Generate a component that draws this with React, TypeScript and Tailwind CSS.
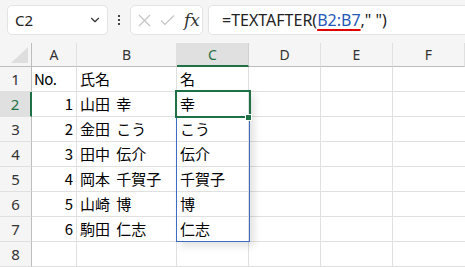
import { ChevronDown } from "lucide-react";

const cols = [
  { key: "A", w: "w-[45px]" },
  { key: "B", w: "w-[100px]" },
  { key: "C", w: "w-[72px]" },
  { key: "D", w: "w-[72px]" },
  { key: "E", w: "w-[72px]" },
  { key: "F", w: "w-[72px]" },
];

type Row = { a?: string; b?: string; c?: string };

const rows: Row[] = [
  { a: "No.", b: "氏名", c: "名" },
  { a: "1", b: "山田 幸", c: "幸" },
  { a: "2", b: "金田 こう", c: "こう" },
  { a: "3", b: "田中 伝介", c: "伝介" },
  { a: "4", b: "岡本 千賀子", c: "千賀子" },
  { a: "5", b: "山崎 博", c: "博" },
  { a: "6", b: "駒田 仁志", c: "仁志" },
  {},
];

const font = { fontFamily: '"Noto Sans CJK JP", "Noto Sans", sans-serif' };

function FormulaBar() {
  return (
    <div className="flex h-[43px] items-start gap-0 bg-[#f5f5f5] pt-[5px] pl-[7px]">
      <div className="flex h-[30px] w-[101px] items-center justify-between rounded-[5px] border border-[#e3e3e3] bg-white pl-[7px] pr-[5px]">
        <span className="text-[15px] text-[#222]" style={{ fontFamily: '"Noto Sans", sans-serif' }}>
          C2
        </span>
        <ChevronDown size={14} strokeWidth={2} className="text-[#333]" />
      </div>
      <div className="flex h-[30px] w-[22px] flex-col items-center justify-center gap-[2px]">
        <span className="block h-[2px] w-[2px] bg-[#444]" />
        <span className="block h-[2px] w-[2px] bg-[#444]" />
        <span className="block h-[2px] w-[2px] bg-[#444]" />
      </div>
      <div className="flex h-[30px] w-[73px] items-center gap-[9px] rounded-[5px] border border-[#e3e3e3] bg-white pl-[7px]">
        <svg width="13" height="13" viewBox="0 0 13 13" className="text-[#c4c4c4]">
          <path d="M1 1L12 12M12 1L1 12" stroke="currentColor" strokeWidth="1.2" fill="none" />
        </svg>
        <svg width="15" height="12" viewBox="0 0 15 12" className="text-[#c4c4c4]">
          <path d="M1 6.5L5 10.5L14 1.5" stroke="currentColor" strokeWidth="1.2" fill="none" />
        </svg>
        <span
          className="text-[17px] italic leading-none text-[#333]"
          style={{ fontFamily: '"DejaVu Serif", "Liberation Serif", serif' }}
        >
          fx
        </span>
      </div>
      <div className="ml-[5px] flex h-[30px] flex-1 items-center rounded-l-[5px] border border-r-0 border-[#e3e3e3] bg-white pl-[13px]">
        <span className="text-[16px] text-[#222]" style={{ fontFamily: '"Noto Sans", sans-serif' }}>
          =TEXTAFTER(
          <span className="text-[#2357b8] underline decoration-[#e00000] decoration-2 underline-offset-[3px]">
            B2:B7
          </span>
          ," ")
        </span>
      </div>
    </div>
  );
}

function HeaderRow() {
  return (
    <div className="flex h-[24px]">
      <div className="relative h-[24px] w-[32px] border-r border-b border-[#bdbdbd] bg-[#f5f5f5]">
        <svg width="17" height="16" viewBox="0 0 17 16" className="absolute right-[3px] bottom-[3px]">
          <path d="M0 16L17 16L17 0Z" fill="#dedede" />
        </svg>
      </div>
      {cols.map((c) => {
        const sel = c.key === "C";
        return (
          <div
            key={c.key}
            className={`flex h-[24px] ${c.w} items-center justify-center border-r text-[14px] ${
              sel
                ? "border-b-2 border-r-[#d0d0d0] border-b-[#1e7145] bg-[#e0e0e0] text-[#1e7145]"
                : "border-b border-r-[#e0e0e0] border-b-[#bdbdbd] bg-[#f5f5f5] text-[#333]"
            }`}
            style={{ fontFamily: '"Noto Sans", sans-serif' }}
          >
            {c.key}
          </div>
        );
      })}
    </div>
  );
}

function Grid() {
  return (
    <div className="relative">
      {rows.map((r, i) => {
        const n = i + 1;
        const sel = n === 2;
        return (
          <div key={n} className="flex h-[25px]">
            <div
              className={`flex h-[25px] w-[32px] items-center justify-center border-b border-b-[#e0e0e0] text-[15px] ${
                sel
                  ? "border-r-2 border-r-[#1e7145] bg-[#e0e0e0] text-[#1e7145]"
                  : "border-r border-r-[#bdbdbd] bg-[#f5f5f5] text-[#333]"
              }`}
              style={{ fontFamily: '"Noto Sans", sans-serif' }}
            >
              {n}
            </div>
            <div
              className={`flex h-[25px] w-[45px] items-center border-r border-b border-[#e0e0e0] text-[15px] text-black ${
                n === 1 ? "justify-start pl-[2px] tracking-[-0.5px]" : "justify-end pr-[3px]"
              }`}
              style={font}
            >
              {r.a}
            </div>
            <div
              className="flex h-[25px] w-[100px] items-center border-r border-b border-[#e0e0e0] pl-[3px] text-[15px] text-black [word-spacing:3px]"
              style={font}
            >
              {r.b}
            </div>
            <div
              className="flex h-[25px] w-[72px] items-center border-r border-b border-[#e0e0e0] pl-[3px] text-[15px] text-black"
              style={font}
            >
              {r.c}
            </div>
            <div className="h-[25px] w-[72px] border-r border-b border-[#e0e0e0] bg-white" />
            <div className="h-[25px] w-[72px] border-r border-b border-[#e0e0e0] bg-white" />
            <div className="h-[25px] w-[72px] border-b border-[#e0e0e0] bg-white" />
          </div>
        );
      })}
      {/* spill range */}
      <div className="pointer-events-none absolute top-[24px] left-[176px] h-[151px] w-[74px] border border-[#3c6cc4] shadow-[4px_4px_8px_rgba(0,0,0,0.12)]" />
      {/* active cell */}
      <div className="pointer-events-none absolute top-[23px] left-[175px] h-[28px] w-[76px] border-2 border-[#1e7145]" />
      <div className="pointer-events-none absolute top-[47px] left-[245px] h-[7px] w-[7px] border border-white bg-[#1e7145]" />
    </div>
  );
}

export default function App() {
  return (
    <div className="h-[267px] w-[465px] overflow-hidden bg-white">
      <FormulaBar />
      <HeaderRow />
      <Grid />
    </div>
  );
}
